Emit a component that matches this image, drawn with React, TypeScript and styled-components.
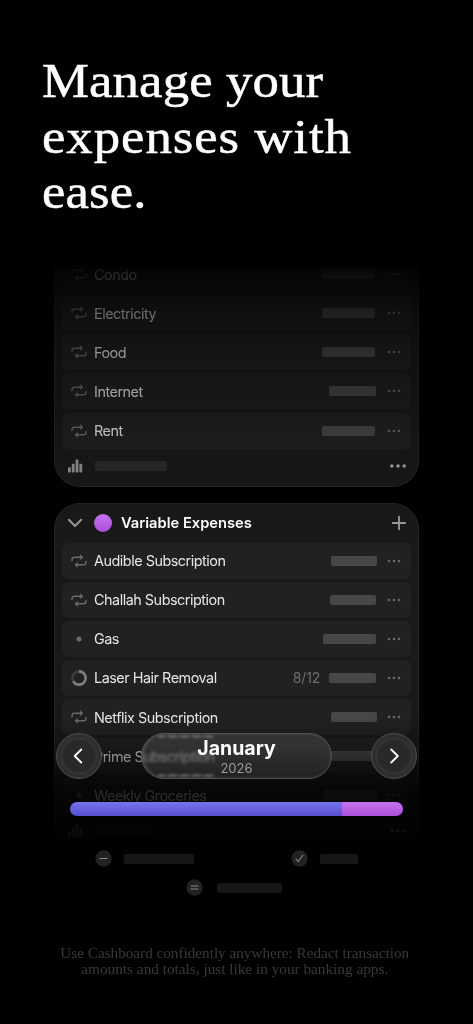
import React from "react";
import styled, { createGlobalStyle } from "styled-components";

const GlobalStyle = createGlobalStyle`
  * { box-sizing: border-box; }
  body { margin: 0; background: #000; }
`;

const Page = styled.main`
  width: 473px;
  height: 1024px;
  overflow: hidden;
  background: #000;
  color: #fff;
  font-family: Inter, "Liberation Sans", sans-serif;
  display: flex;
  flex-direction: column;
`;

const Headline = styled.h1`
  margin: 0;
  height: 262px;
  padding: 53px 0 0 42px;
  font: 400 48px/55.5px "Liberation Serif", serif;
  white-space: nowrap;
`;

const HeadlineText = styled.span<{ $spacing: number }>`
  display: block;
  width: fit-content;
  letter-spacing: ${(p) => p.$spacing}px;
  transform: scaleX(1.1);
  transform-origin: left;
  -webkit-text-stroke: 0.5px #fff;
`;

const Phone = styled.section`
  position: relative;
  height: 642px;
  overflow: hidden;
`;

const Cards = styled.div`
  display: flex;
  flex-direction: column;
  gap: 16px;
  margin: -46px 54px 0 54px;
`;

const Card = styled.div`
  padding: 0 7px;
  border: 1px solid #262626;
  border-radius: 26px;
  background: #191919;
`;

const CardHeader = styled.div`
  height: 39px;
  display: flex;
  align-items: center;
  padding: 0 4px 1px 5px;
`;

const Dot = styled.span`
  width: 18px;
  height: 18px;
  margin: 0 9px 0 11px;
  border-radius: 50%;
  background: linear-gradient(#c974f4, #ad4ddd);
`;

const CardTitle = styled.h2`
  flex: 1;
  margin: 0;
  font-size: 14.7px;
  font-weight: 600;
`;

const Rows = styled.div`
  display: flex;
  flex-direction: column;
  gap: 3.15px;
`;

const Row = styled.div`
  height: 36px;
  display: flex;
  align-items: center;
  padding: 0 10px 0 9px;
  border-radius: 6px;
  background: #212121;
`;

const IconSlot = styled.span`
  width: 16px;
  height: 16px;
  margin-right: 7px;
  display: flex;
  align-items: center;
  justify-content: center;
`;

const Name = styled.span`
  flex: 1;
  font-size: 14.4px;
  letter-spacing: -0.48px;
  color: #e6e6e6;
  white-space: nowrap;
`;

const Count = styled.span`
  margin-right: 9px;
  font-size: 14px;
  letter-spacing: -0.2px;
  color: #6e6e6e;
`;

const Redacted = styled.span<{ $width: number; $right?: number; $color?: string }>`
  width: ${(p) => p.$width}px;
  height: 10px;
  margin-right: ${(p) => p.$right ?? 0}px;
  border-radius: 2px;
  background: ${(p) => p.$color ?? "#474747"};
`;

const CardFooter = styled.div`
  height: 37px;
  display: flex;
  align-items: center;
  justify-content: space-between;
  padding: 0 4px 2px 6px;
`;

const FooterSummary = styled.div`
  display: flex;
  align-items: center;
  gap: 12px;
`;

const Fade = styled.div<{ $from: number; $height: number; $stops: string }>`
  position: absolute;
  left: 0;
  right: 0;
  top: ${(p) => p.$from}px;
  height: ${(p) => p.$height}px;
  background: linear-gradient(${(p) => p.$stops});
`;

const Controls = styled.div`
  position: absolute;
  top: 471px;
  left: 56px;
  width: 361px;
`;

const MonthBar = styled.div`
  display: flex;
  align-items: center;
  justify-content: space-between;
`;

const RoundButton = styled.button`
  width: 46px;
  height: 46px;
  padding: 0;
  display: grid;
  place-items: center;
  border: 1px solid #4b4b4b;
  border-radius: 50%;
  background: radial-gradient(circle, #292929 0 50%, #363636 58%, #2b2b2b 63%, #343434);
  box-shadow: inset 0 0 3px #5a5a5a55;
`;

const MonthPill = styled.div`
  position: relative;
  width: 191px;
  height: 46px;
  padding-top: 3px;
  border: 1px solid #505050;
  border-radius: 23px;
  background: linear-gradient(#38383898, #2a2a2ab0);
  backdrop-filter: blur(1.8px) brightness(1.9);
  box-shadow: inset 2px 0 3px #77777755, inset 0 0 3px #66666640;
  text-align: center;

  &::before,
  &::after {
    content: "";
    position: absolute;
    left: 16px;
    width: 57px;
    height: 3px;
    border-radius: 2px;
    background: repeating-linear-gradient(90deg, #777 0 5px, #484848 8px, #6b6b6b 12px);
    filter: blur(1.3px);
    opacity: 0.7;
  }
  &::before { top: 1px; }
  &::after { bottom: 1px; }
`;

const Month = styled.div`
  font-size: 19.5px;
  line-height: 23px;
  font-weight: 700;
`;

const Year = styled.div`
  font-size: 13px;
  line-height: 17px;
  color: #9b9b9b;
`;

const SplitBar = styled.div`
  display: grid;
  grid-template-columns: 272px 61px;
  width: 333px;
  height: 14px;
  margin: 23px 0 0 14px;
  border-radius: 7px;
  overflow: hidden;
`;

const Segment = styled.span<{ $top: string; $bottom: string }>`
  background: linear-gradient(${(p) => p.$top}, ${(p) => p.$bottom});
`;

const Totals = styled.div`
  display: flex;
  justify-content: space-between;
  margin: 34px 59px 0 39px;
`;

const ResultTotal = styled.div`
  display: flex;
  margin: 12px 0 0 130px;
`;

const Total = styled.div<{ $gap: number }>`
  display: flex;
  align-items: center;
  gap: ${(p) => p.$gap}px;
`;

const Caption = styled.p`
  margin: 42px 0 0;
  display: flex;
  flex-direction: column;
  align-items: center;
  font: 14px/16px "Liberation Serif", serif;
  color: #393939;
  white-space: nowrap;
`;

const CaptionText = styled.span<{ $stretch: number }>`
  margin-right: 3px;
  transform: scaleX(${(p) => p.$stretch});
`;

const RepeatIcon = () => (
  <svg width="16" height="14" viewBox="0 0 16 14" fill="none" stroke="#6b6b6b" strokeWidth="1.4" strokeLinecap="round" strokeLinejoin="round">
    <path d="M1 6.5V5.8Q1 3.2 3.6 3.2H11M15 7.5V8.2Q15 10.8 12.4 10.8H5" />
    <path d="M9.7 1 12 3.2 9.7 5.4ZM6.3 8.6 4 10.8 6.3 13Z" fill="#6b6b6b" strokeWidth=".6" />
  </svg>
);

const PointIcon = () => (
  <svg width="16" height="16">
    <circle cx="8" cy="8" r="2.5" fill="#6b6b6b" />
  </svg>
);

const RingIcon = () => (
  <svg width="16" height="16" fill="none" strokeWidth="2.6">
    <circle cx="8" cy="8" r="6.6" stroke="#3d3d3d" />
    <path d="M8 1.4A6.6 6.6 0 1 1 2.28 11.3" stroke="#7c7c7c" />
  </svg>
);

const More = ({ large = false }: { large?: boolean }) => (
  <svg width={large ? 18 : 14} height="6" fill={large ? "#a5a5a5" : "#666"}>
    {[0, 1, 2].map((i) => (
      <circle key={i} cx={large ? 2.8 + i * 6.2 : 2 + i * 5} cy="3" r={large ? 1.75 : 1.35} />
    ))}
  </svg>
);

const BarsIcon = () => (
  <svg width="15" height="14" fill="#8e8e8e">
    <rect x="0" y="8.3" width="2.8" height="5.2" rx=".7" />
    <rect x="3.8" y="4.7" width="2.8" height="8.8" rx=".7" />
    <rect x="7.6" y=".6" width="2.8" height="12.9" rx=".7" />
    <rect x="11.4" y="4.7" width="2.8" height="8.8" rx=".7" />
  </svg>
);

const Chevron = ({ d }: { d: string }) => (
  <svg width="16" height="18" viewBox="0 0 16 18" fill="none" stroke="#fff" strokeWidth="1.8" strokeLinecap="round" strokeLinejoin="round">
    <path d={d} />
  </svg>
);

const SignIcon = ({ d }: { d: string }) => (
  <svg width="17" height="17" fill="none" strokeLinecap="round" strokeLinejoin="round">
    <circle cx="8.5" cy="8.5" r="8.2" fill="#222" />
    <path d={d} stroke="#8a8a8a" strokeWidth="1.1" />
  </svg>
);

type Kind = "repeat" | "point" | "ring";
interface Expense {
  name: string;
  bar: number;
  right?: number;
  kind?: Kind;
  count?: string;
}

const fixed: Expense[] = [
  { name: "Condo", bar: 53, right: 12 },
  { name: "Electricity", bar: 53, right: 12 },
  { name: "Food", bar: 53, right: 12 },
  { name: "Internet", bar: 47, right: 11 },
  { name: "Rent", bar: 53, right: 12 },
];

const variable: Expense[] = [
  { name: "Audible Subscription", bar: 46, right: 10 },
  { name: "Challah Subscription", bar: 46, right: 11 },
  { name: "Gas", bar: 53, right: 11, kind: "point" },
  { name: "Laser Hair Removal", bar: 47, right: 11, kind: "ring", count: "8/12" },
  { name: "Netflix Subscription", bar: 46, right: 10 },
  { name: "Prime Subscription", bar: 46, right: 11 },
  { name: "Weekly Groceries", bar: 53, right: 10, kind: "point" },
];

const icons: Record<Kind, React.ReactNode> = {
  repeat: <RepeatIcon />,
  point: <PointIcon />,
  ring: <RingIcon />,
};

const ExpenseRows = ({ items }: { items: Expense[] }) => (
  <Rows>
    {items.map((e) => (
      <Row key={e.name}>
        <IconSlot>{icons[e.kind ?? "repeat"]}</IconSlot>
        <Name>{e.name}</Name>
        {e.count && <Count>{e.count}</Count>}
        <Redacted $width={e.bar} $right={e.right} />
        <More />
      </Row>
    ))}
  </Rows>
);

const Footer = ({ width }: { width: number }) => (
  <CardFooter>
    <FooterSummary>
      <BarsIcon />
      <Redacted $width={width} $color="#2a2a2a" />
    </FooterSummary>
    <More large />
  </CardFooter>
);

const CategoryHeader = ({ title }: { title: string }) => (
  <CardHeader>
    <svg width="16" height="10" fill="none" stroke="#999" strokeWidth="2" strokeLinecap="round" strokeLinejoin="round">
      <path d="M1.8 1.8 8 8 14.2 1.8" />
    </svg>
    <Dot />
    <CardTitle>{title}</CardTitle>
    <svg width="16" height="16" stroke="#999" strokeWidth="1.9" strokeLinecap="round">
      <path d="M8 1.8V14.2M1.8 8H14.2" />
    </svg>
  </CardHeader>
);

export default function App() {
  return (
    <>
      <GlobalStyle />
      <Page>
        <Headline>
          <HeadlineText $spacing={0.1}>Manage your</HeadlineText>
          <HeadlineText $spacing={0.85}>expenses with</HeadlineText>
          <HeadlineText $spacing={0.1}>ease.</HeadlineText>
        </Headline>
        <Phone>
          <Cards>
            <Card>
              <CardHeader />
              <ExpenseRows items={fixed} />
              <Footer width={72} />
            </Card>
            <Card>
              <CategoryHeader title="Variable Expenses" />
              <ExpenseRows items={variable} />
              <Footer width={58} />
            </Card>
          </Cards>
          <Fade $from={0} $height={270} $stops="#000 0%, rgba(0,0,0,.82) 5%, rgba(0,0,0,.54) 20%, rgba(0,0,0,.37) 34%, rgba(0,0,0,.3) 50%, rgba(0,0,0,.16) 65%, rgba(0,0,0,.06) 82%, transparent" />
          <Fade $from={455} $height={187} $stops="transparent, rgba(0,0,0,.3) 18%, rgba(0,0,0,.8) 38%, rgba(0,0,0,.9) 60%, #000 73%" />
          <Controls>
            <MonthBar>
              <RoundButton aria-label="Previous month">
                <Chevron d="M10.3 2.5 3.7 9 10.3 15.5" />
              </RoundButton>
              <MonthPill>
                <Month>January</Month>
                <Year>2026</Year>
              </MonthPill>
              <RoundButton aria-label="Next month">
                <Chevron d="M5.2 2.5 11.8 9 5.2 15.5" />
              </RoundButton>
            </MonthBar>
            <SplitBar>
              <Segment $top="#7774ed" $bottom="#554fce" />
              <Segment $top="#c673ed" $bottom="#ac50db" />
            </SplitBar>
            <Totals>
              <Total $gap={12}>
                <SignIcon d="M5 8.5H12" />
                <Redacted $width={70} $color="#171717" />
              </Total>
              <Total $gap={12}>
                <SignIcon d="M5 9 7.3 11.7 11.8 5.3" />
                <Redacted $width={38} $color="#171717" />
              </Total>
            </Totals>
            <ResultTotal>
              <Total $gap={14}>
                <SignIcon d="M5 7H12M5 10H12" />
                <Redacted $width={65} $color="#171717" />
              </Total>
            </ResultTotal>
          </Controls>
        </Phone>
        <Caption>
          <CaptionText $stretch={1.085}>Use Cashboard confidently anywhere: Redact transaction</CaptionText>
          <CaptionText $stretch={1.09}>amounts and totals, just like in your banking apps.</CaptionText>
        </Caption>
      </Page>
    </>
  );
}
